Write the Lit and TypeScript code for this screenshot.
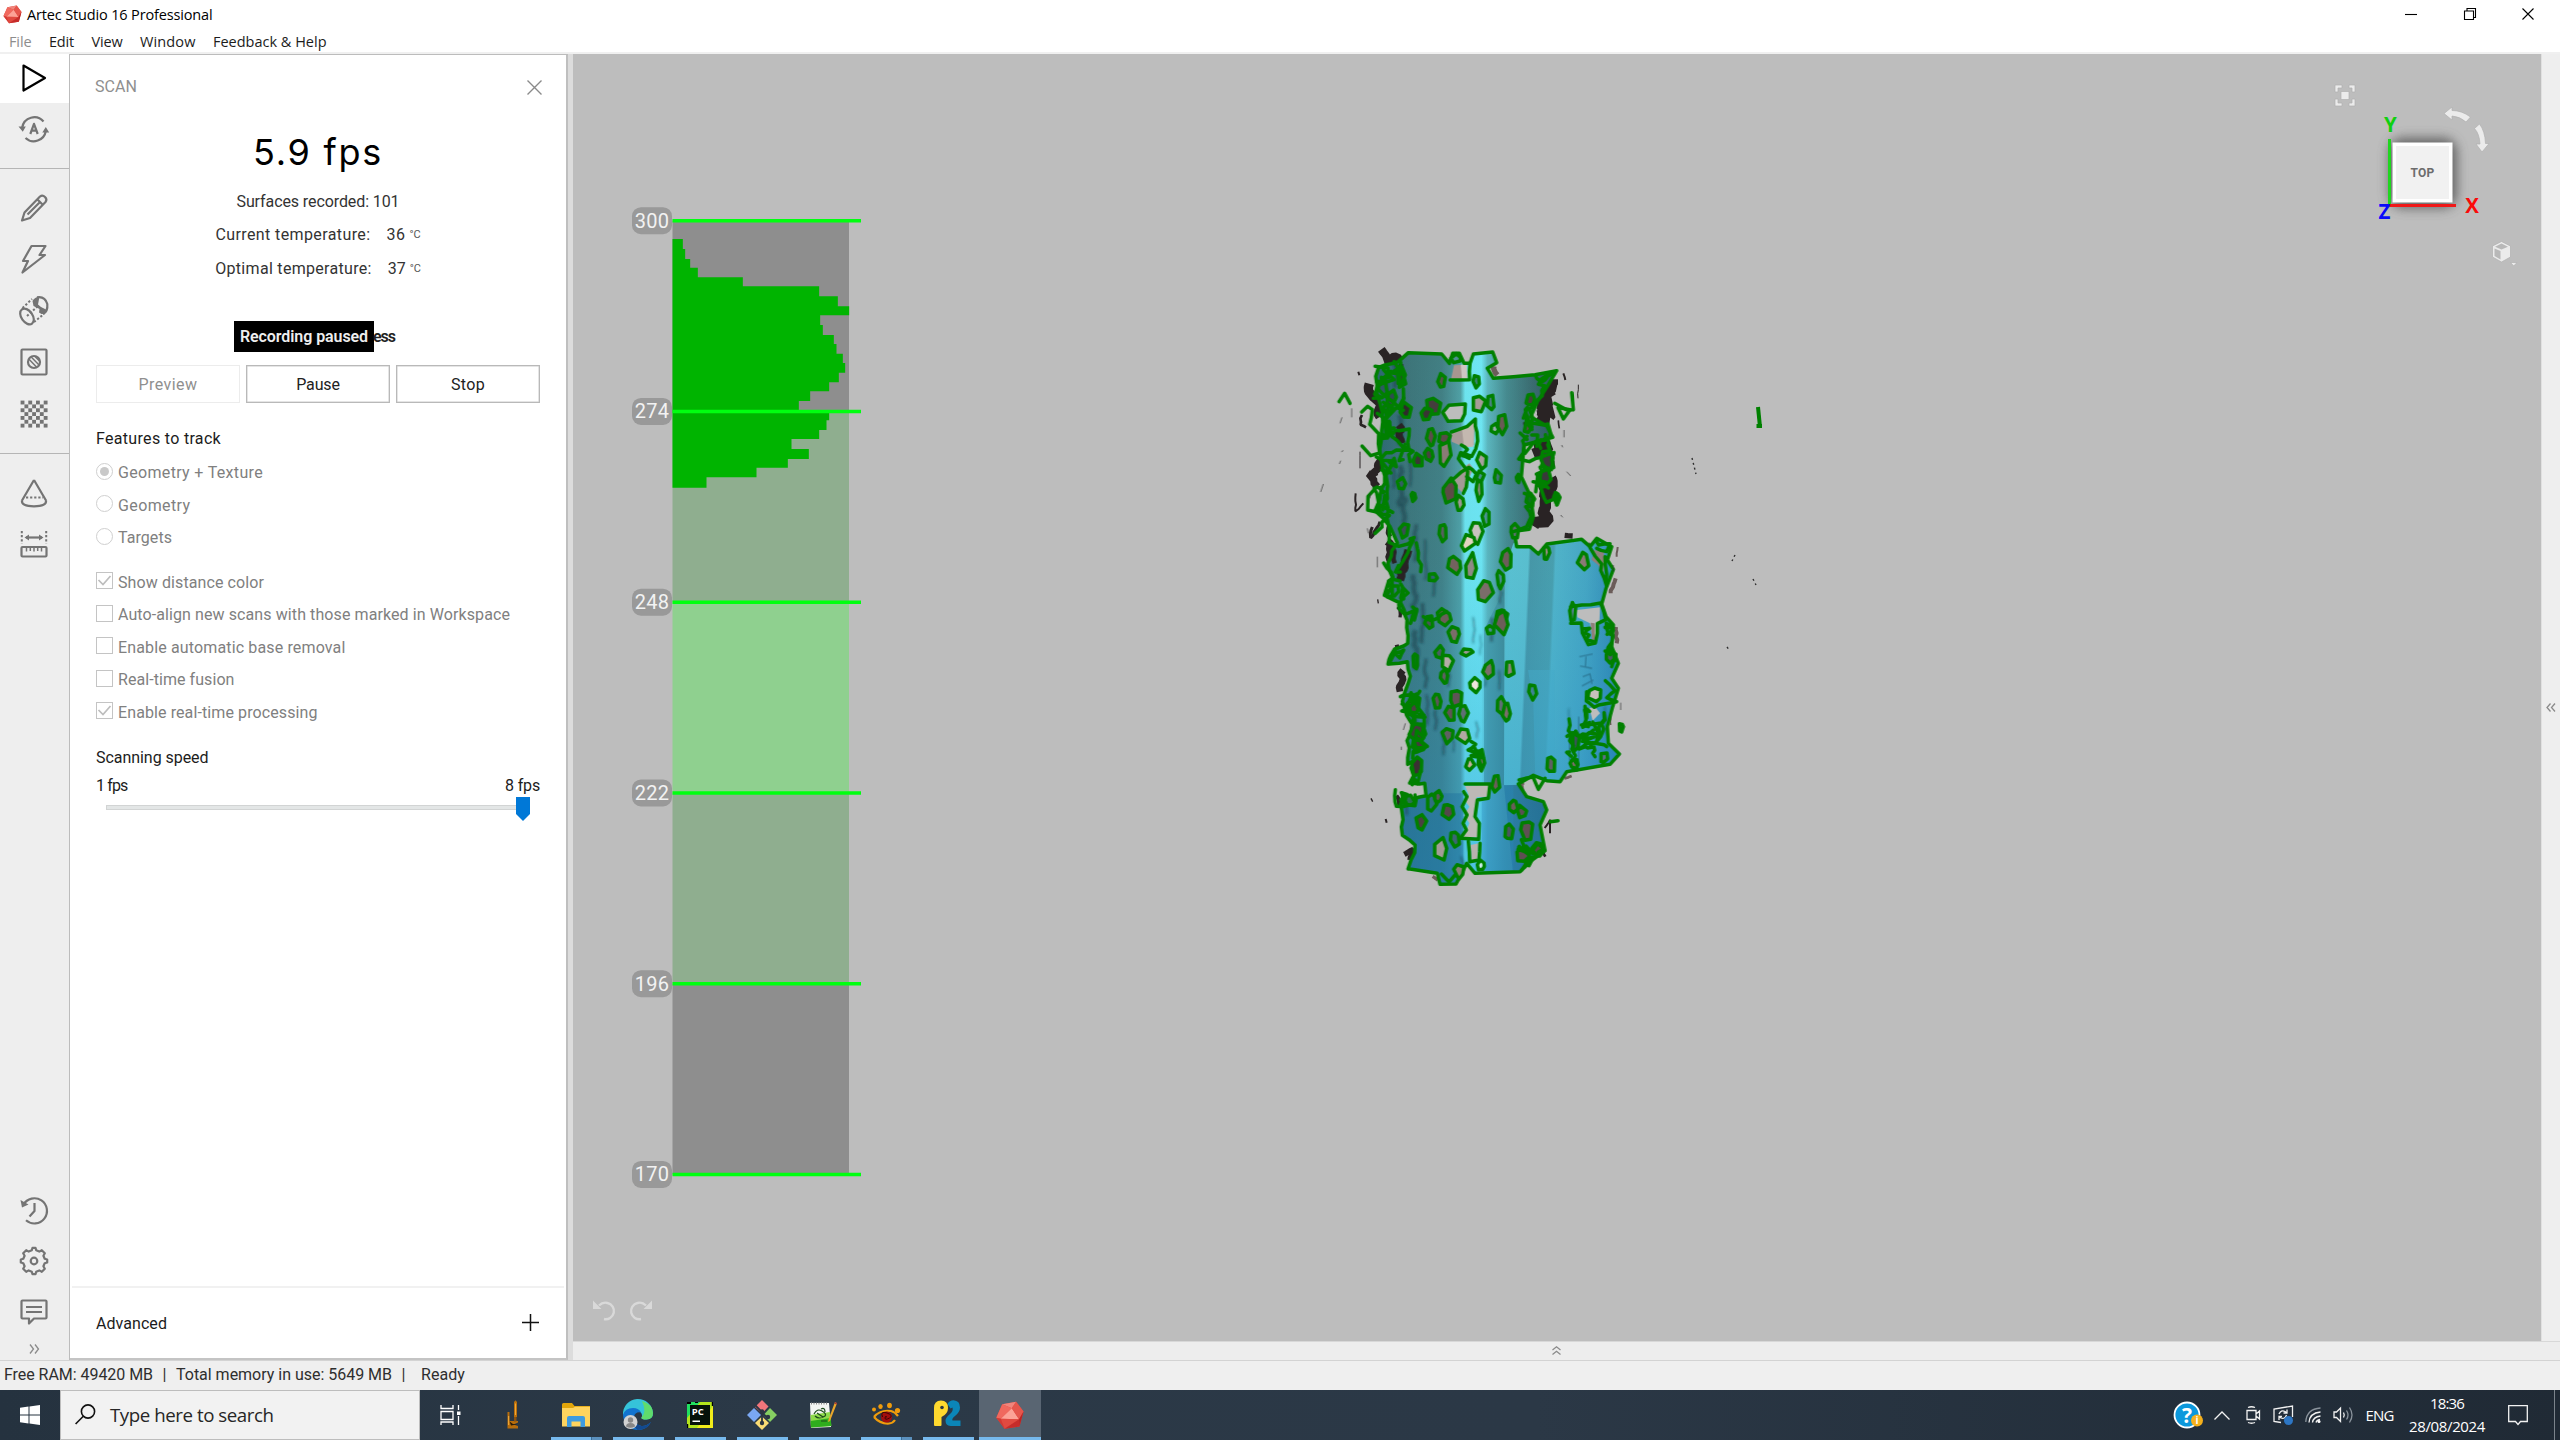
import { LitElement, html, svg, css } from "lit";
import { customElement, property } from "lit/decorators.js";
import { classMap } from "lit/directives/class-map.js";

/* A line of text whose tracking is adjusted so that it takes a given width. */
@customElement("fit-label")
class FitLabel extends LitElement {
  @property() text = "";
  @property({ type: Number }) width = 0;
  static styles = css`
    :host { display: inline-block; white-space: pre; }
    .t { display: inline-block; }
  `;
  render() {
    return html`<span class="t">${this.text}</span>`;
  }
  updated() {
    const el = this.renderRoot.querySelector(".t") as HTMLElement;
    el.style.letterSpacing = "0px";
    const natural = el.getBoundingClientRect().width;
    el.style.letterSpacing = `${((this.width - natural) / this.text.length).toFixed(3)}px`;
  }
}

const label = (text: string, width: number) => html`<fit-label .text=${text} .width=${width}></fit-label>`;

/* ---------- scanned surface ---------- */

let seed = 11;
const rnd = () => {
  seed = (seed * 16807) % 2147483647;
  return seed / 2147483647;
};

type Pt = [number, number];
const toPath = (p: Pt[], close = false) =>
  "M" + p.map(([x, y]) => `${x.toFixed(0)} ${y.toFixed(0)}`).join("L") + (close ? "Z" : "");

/* Breaks every segment into short steps and shifts them sideways. */
const jag = (p: Pt[], step: number, amp: number): Pt[] => {
  const out: Pt[] = [];
  for (let i = 0; i < p.length - 1; i++) {
    const [x0, y0] = p[i];
    const [x1, y1] = p[i + 1];
    const n = Math.max(1, Math.round(Math.hypot(x1 - x0, y1 - y0) / step));
    for (let k = 0; k < n; k++) {
      const t = k / n;
      out.push([x0 + (x1 - x0) * t + (rnd() - 0.5) * amp * 2, y0 + (y1 - y0) * t + (rnd() - 0.5) * amp]);
    }
  }
  out.push(p[p.length - 1]);
  return out;
};

/* Clean upper and right outline, then the ragged left one going upwards. */
const BODY_CLEAN: Pt[] = [
  [325, 68], [425, 72], [448, 100], [458, 70], [478, 70], [492, 100], [510, 100], [520, 72], [578, 66], [590, 98], [562, 115], [580, 145],
  [640, 140], [705, 134], [770, 122], [740, 172], [712, 215], [692, 260], [740, 288], [758, 322], [672, 345], [664, 440], [692, 500],
  [700, 560], [688, 598], [642, 604], [650, 650], [690, 650], [715, 672], [740, 642], [845, 628], [870, 650], [890, 625], [935, 650], [922, 690],
  [940, 718], [918, 775], [905, 822], [918, 860], [940, 885], [935, 950], [955, 1000], [935, 1045], [955, 1075], [938, 1130], [922, 1190],
  [925, 1240], [958, 1272], [930, 1303], [800, 1325], [780, 1355], [740, 1352], [700, 1336], [655, 1362], [680, 1400], [730, 1415],
  [740, 1440], [720, 1485], [735, 1562], [690, 1595], [660, 1625], [525, 1630], [500, 1600], [468, 1662], [420, 1663], [412, 1630],
  [330, 1617],
];
const BODY_RAGGED: Pt[] = [
  [330, 1617], [345, 1545], [310, 1515], [305, 1420], [380, 1395], [380, 1362], [335, 1360], [340, 1290], [318, 1306], [330, 1180], [302, 1112],
  [330, 1060], [318, 995], [268, 1000], [290, 960], [325, 940], [325, 870], [290, 815], [258, 800], [278, 745], [258, 700], [290, 640],
  [265, 590], [230, 540], [240, 480], [260, 440], [245, 385], [238, 330], [250, 250], [230, 190], [232, 112], [300, 95], [325, 68],
];

/* x, y, width, height, fill */
const HOLES: [number, number, number, number, string][] = [
  [425, 152, 22, 42, "#5d4f4c"], [528, 152, 22, 40, "#3f7f80"], [468, 85, 34, 28, "#4f8f92"],
  [540, 222, 44, 52, "#a69c98"], [573, 220, 24, 46, "#4b8082"], [398, 228, 44, 56, "#453d3d"], [380, 250, 32, 40, "#3a3434"], [318, 242, 36, 48, "#2f2a2b"],
  [605, 280, 26, 74, "#6a5a56"], [585, 296, 22, 28, "#9ab0b0"], [433, 325, 34, 46, "#5a4b48"], [392, 322, 28, 52, "#5c4d4b"], [435, 375, 34, 84, "#8a7b77"],
  [388, 375, 28, 40, "#4a4241"], [353, 390, 32, 52, "#3b3636"], [547, 392, 30, 58, "#a8a09c"], [448, 485, 46, 72, "#5c4b46"], [480, 518, 22, 44, "#9b9794"],
  [538, 478, 24, 74, "#8f8985"], [594, 444, 24, 48, "#3f7377"], [540, 440, 24, 30, "#4a8f94"], [558, 562, 22, 50, "#4d9296"], [528, 606, 40, 66, "#c9c3bf"],
  [502, 635, 48, 50, "#e2d3c0"], [429, 608, 28, 52, "#57605f"], [464, 702, 38, 54, "#74625e"], [512, 710, 32, 78, "#8f8985"], [555, 784, 46, 76, "#7b6d69"],
  [620, 690, 34, 74, "#6c5d59"], [400, 742, 30, 24, "#2f656d"], [600, 748, 22, 48, "#4a8a92"], [605, 862, 34, 50, "#6c5d59"], [430, 862, 40, 50, "#6c5d59"],
  [740, 668, 20, 46, "#9b8b86"], [850, 692, 36, 54, "#8b7a76"], [645, 605, 24, 40, "#5f6f70"],
  [606, 876, 40, 70, "#6c5d59"], [462, 910, 40, 48, "#7b6d69"], [572, 902, 28, 28, "#4a8a92"], [418, 968, 28, 48, "#4c5f63"],
  [444, 998, 36, 54, "#b5aca8"], [500, 966, 34, 22, "#9b9794"], [432, 1038, 22, 46, "#5f5f62"], [524, 1064, 34, 46, "#eee5dd"], [567, 1020, 34, 52, "#7b6d69"],
  [628, 1018, 34, 50, "#8f837f"], [697, 1080, 24, 50, "#3f8494"], [412, 1112, 24, 46, "#5b5659"], [468, 1106, 40, 48, "#5f5455"], [452, 1148, 34, 46, "#5f5455"],
  [490, 1150, 28, 46, "#5f6f74"], [602, 1130, 26, 50, "#5f6f74"], [620, 1148, 26, 52, "#7b6d69"], [444, 1216, 32, 48, "#5f5f62"], [489, 1214, 36, 48, "#b2a8a4"],
  [510, 1304, 24, 40, "#c5b0a0"], [543, 1292, 20, 66, "#7b6d69"], [752, 1304, 28, 44, "#5f5f62"],
  [587, 1362, 26, 48, "#6c5d59"], [444, 1445, 36, 52, "#54484a"], [362, 1475, 32, 46, "#4b4042"], [395, 1415, 30, 50, "#2f6f80"], [414, 1400, 24, 42, "#5b5659"],
  [422, 1556, 36, 72, "#a59c98"], [465, 1526, 28, 42, "#3c6572"], [640, 1430, 26, 42, "#6c5d59"], [666, 1446, 30, 38, "#5a5053"], [628, 1505, 26, 50, "#4b5560"],
  [680, 1500, 36, 66, "#5f5053"], [668, 1575, 40, 50, "#5f5053"], [714, 1560, 36, 42, "#54484a"], [476, 1624, 34, 40, "#8f7f79"], [544, 1606, 20, 34, "#cfeaf0"],
  [324, 1410, 44, 30, "#2a6f52"], [342, 1122, 34, 70, "#4c4140"], [352, 1205, 44, 58, "#453b3d"], [356, 1248, 38, 44, "#453b3d"], [352, 1310, 34, 56, "#3b3033"],
  [818, 845, 22, 60, "#4f7f88"], [826, 1230, 24, 66, "#3a5358"], [822, 1300, 26, 30, "#7b6d69"], [912, 1282, 22, 36, "#5f6f84"], [884, 1092, 48, 44, "#c9c1bd"],
  [930, 976, 24, 50, "#4b5a68"], [312, 600, 30, 46, "#3b4f52"], [388, 875, 24, 50, "#4a5558"], [346, 990, 14, 46, "#0f7420"],
  [340, 500, 12, 26, "#0f7420"], [305, 460, 22, 36, "#335f62"], [250, 175, 30, 60, "#2d5961"], [302, 135, 26, 60, "#39373a"], [274, 205, 26, 48, "#2f4b4e"],
  [742, 390, 34, 62, "#39393a"], [735, 440, 34, 52, "#39393a"], [690, 508, 26, 44, "#0f7420"], [655, 445, 12, 28, "#0f7420"], [964, 1192, 14, 28, "#4f6a4c"],
  [770, 506, 18, 34, "#0f7420"], [690, 210, 24, 36, "#4a3f3f"], [684, 290, 26, 40, "#5a4a4a"],
];

const holePath = (x: number, y: number, w: number, h: number) => {
  const n = 5 + Math.floor(rnd() * 2);
  const pts: Pt[] = [];
  const a0 = rnd() * 1.2 - 1.6;
  for (let i = 0; i < n; i++) {
    const a = a0 + (i / n) * Math.PI * 2 + (rnd() - 0.5) * 0.7;
    const r = 0.4 + rnd() * 0.2;
    pts.push([x + Math.cos(a) * w * r, y + Math.sin(a) * h * r]);
  }
  return toPath(pts, true);
};

/* Dark fringe strips next to the outline: centre line and width. */
const FRINGE: { p: Pt[]; w: number }[] = [
  { p: [[250, 62], [268, 100], [290, 75], [300, 110]], w: 24 },
  { p: [[205, 160], [215, 200], [238, 220], [240, 260]], w: 28 },
  { p: [[185, 255], [180, 285], [198, 292]], w: 8 },
  { p: [[238, 390], [225, 440], [208, 430], [232, 470]], w: 22 },
  { p: [[165, 490], [166, 545], [190, 520]], w: 6 },
  { p: [[215, 590], [212, 625], [240, 575]], w: 9 },
  { p: [[262, 630], [270, 680], [285, 740]], w: 24 },
  { p: [[258, 480], [262, 560], [270, 620]], w: 14 },
  { p: [[310, 680], [318, 730], [296, 760]], w: 32 },
  { p: [[756, 150], [742, 200], [728, 230], [748, 262], [712, 262]], w: 46 },
  { p: [[700, 335], [742, 350], [742, 375], [700, 372]], w: 32 },
  { p: [[762, 440], [748, 490], [742, 530], [734, 575], [700, 588]], w: 34 },
  { p: [[758, 395], [738, 420], [725, 470], [735, 520]], w: 22 },
  { p: [[790, 130], [796, 150]], w: 6 },
  { p: [[776, 270], [778, 295]], w: 5 },
  { p: [[790, 618], [818, 618]], w: 16 },
  { p: [[175, 125], [178, 136]], w: 6 },
  { p: [[835, 165], [834, 205]], w: 3 },
  { p: [[180, 365], [180, 415]], w: 3 },
  { p: [[296, 830], [300, 862]], w: 10 },
  { p: [[290, 945], [296, 980]], w: 12 },
  { p: [[305, 1020], [300, 1085]], w: 20 },
  { p: [[350, 815], [360, 850]], w: 12 },
  { p: [[312, 1575], [340, 1560], [330, 1590]], w: 16 },
  { p: [[735, 1495], [752, 1470], [750, 1510]], w: 6 },
  { p: [[258, 1468], [260, 1478]], w: 6 },
  { p: [[212, 1405], [218, 1415]], w: 4 },
  { p: [[232, 808], [235, 820]], w: 4 },
  { p: [[290, 1395], [296, 1425]], w: 12 },
  { p: [[730, 1568], [736, 1580]], w: 8 },
];

/* Dark gaps that open inside the surface near its rims. */
const GAPS: { p: Pt[]; w: number }[] = [
  { p: [[298, 285], [305, 340]], w: 22 },
  { p: [[318, 222], [322, 262]], w: 18 },
  { p: [[305, 100], [300, 160]], w: 14 },
  { p: [[326, 660], [318, 700], [300, 750]], w: 24 },
  { p: [[276, 640], [284, 700]], w: 14 },
  { p: [[695, 195], [686, 225]], w: 14 },
  { p: [[682, 275], [676, 305]], w: 16 },
  { p: [[345, 1300], [362, 1325]], w: 12 },
  { p: [[345, 1190], [362, 1215]], w: 16 },
  { p: [[340, 1100], [345, 1140]], w: 9 },
];

const BROWN: { p: Pt[]; w: number }[] = [
  { p: [[945, 745], [932, 790]], w: 12 },
  { p: [[952, 650], [950, 680]], w: 6 },
  { p: [[946, 890], [950, 940]], w: 12 },
  { p: [[940, 1060], [950, 1085]], w: 12 },
  { p: [[930, 1150], [932, 1185]], w: 5 },
  { p: [[580, 108], [592, 135]], w: 16 },
  { p: [[400, 1638], [414, 1650]], w: 10 },
  { p: [[630, 1622], [652, 1608]], w: 12 },
  { p: [[795, 1345], [815, 1338]], w: 8 },
  { p: [[690, 1402], [660, 1360]], w: 14 },
  { p: [[862, 640], [880, 655]], w: 10 },
];

/* Tangled boundary edges. */
const TANGLES: { p: Pt[]; s: number; a: number }[] = [
  { p: [[300, 95], [315, 160], [295, 170], [300, 110]], s: 20, a: 6 },
  { p: [[230, 110], [262, 115], [280, 150], [235, 165], [225, 190], [250, 205], [220, 205]], s: 22, a: 8 },
  { p: [[118, 215], [135, 190], [150, 220]], s: 60, a: 1 },
  { p: [[185, 245], [200, 228], [215, 240], [212, 285], [235, 310], [240, 370], [210, 378], [186, 348]], s: 26, a: 4 },
  { p: [[260, 200], [285, 230], [265, 270], [245, 330], [285, 300], [325, 300], [318, 360], [255, 365], [245, 400]], s: 20, a: 9 },
  { p: [[240, 250], [270, 310], [300, 350], [335, 360], [330, 395]], s: 20, a: 9 },
  { p: [[235, 380], [275, 395], [258, 440], [270, 470], [258, 520], [238, 540], [265, 560], [225, 610]], s: 20, a: 8 },
  { p: [[228, 470], [205, 500], [206, 540], [240, 548], [232, 490], [222, 475]], s: 30, a: 3 },
  { p: [[262, 570], [270, 640], [300, 650], [345, 630], [325, 670], [295, 715]], s: 22, a: 6 },
  { p: [[345, 640], [355, 670], [362, 725]], s: 20, a: 4 },
  { p: [[255, 700], [275, 730], [265, 770], [300, 770], [280, 800], [262, 800]], s: 16, a: 7 },
  { p: [[300, 760], [322, 790], [300, 820], [320, 855], [350, 838]], s: 18, a: 6 },
  { p: [[372, 862], [395, 870], [440, 845]], s: 16, a: 6 },
  { p: [[735, 135], [710, 160], [740, 165], [712, 215], [690, 240], [700, 280], [750, 285], [755, 325], [690, 340], [675, 370]], s: 22, a: 7 },
  { p: [[705, 140], [722, 155], [765, 125]], s: 14, a: 4 },
  { p: [[762, 220], [800, 240], [818, 238], [815, 188]], s: 40, a: 2 },
  { p: [[775, 232], [790, 268], [810, 240], [785, 235]], s: 30, a: 2 },
  { p: [[680, 320], [668, 350], [660, 390], [690, 395], [720, 380], [760, 370], [755, 410], [715, 430], [720, 480], [745, 520], [775, 490], [770, 525]], s: 20, a: 7 },
  { p: [[675, 490], [702, 500], [698, 528], [680, 530], [695, 560], [682, 590], [640, 605]], s: 20, a: 4 },
  { p: [[455, 305], [500, 290], [525, 270], [530, 330], [520, 380], [485, 370], [470, 385], [490, 400], [505, 450], [490, 490]], s: 24, a: 6 },
  { p: [[450, 455], [480, 425], [505, 410], [530, 430], [520, 455], [500, 440]], s: 20, a: 5 },
  { p: [[482, 345], [500, 360], [488, 375], [508, 385]], s: 14, a: 5 },
  { p: [[510, 100], [508, 150], [450, 150]], s: 30, a: 2 },
  { p: [[870, 655], [900, 700], [915, 765], [925, 730], [915, 680]], s: 24, a: 5 },
  { p: [[888, 630], [895, 645], [930, 640], [920, 665], [890, 655]], s: 20, a: 3 },
  { p: [[815, 830], [905, 820], [915, 870], [895, 880], [888, 940], [865, 945], [850, 910], [845, 880], [812, 880]], s: 30, a: 3 },
  { p: [[850, 895], [868, 895], [855, 910], [870, 915], [860, 930], [880, 935]], s: 12, a: 3 },
  { p: [[918, 880], [935, 920], [925, 950], [950, 985], [935, 1010]], s: 16, a: 7 },
  { p: [[915, 1055], [940, 1080], [920, 1100], [945, 1115], [880, 1130], [855, 1110], [860, 1085]], s: 18, a: 6 },
  { p: [[855, 1130], [850, 1190], [900, 1180], [915, 1150], [905, 1200], [890, 1240], [920, 1250]], s: 18, a: 7 },
  { p: [[805, 1170], [812, 1230], [830, 1320]], s: 16, a: 6 },
  { p: [[835, 1215], [870, 1210], [895, 1215], [890, 1240], [850, 1240], [840, 1255], [880, 1250], [885, 1280]], s: 12, a: 6 },
  { p: [[845, 1225], [885, 1222], [850, 1232], [880, 1240]], s: 10, a: 4 },
  { p: [[268, 1000], [280, 960], [300, 985], [312, 960], [285, 968]], s: 14, a: 5 },
  { p: [[300, 1100], [345, 1095], [355, 1130], [370, 1160], [330, 1155], [310, 1140], [340, 1120]], s: 14, a: 7 },
  { p: [[305, 1120], [330, 1130], [315, 1150], [345, 1160]], s: 12, a: 5 },
  { p: [[350, 1180], [372, 1190], [365, 1230], [382, 1250], [350, 1250], [338, 1285]], s: 16, a: 6 },
  { p: [[283, 1380], [288, 1430], [345, 1425], [345, 1395]], s: 18, a: 4 },
  { p: [[515, 1235], [525, 1245], [505, 1262], [540, 1262], [512, 1278], [548, 1285], [520, 1250], [545, 1310]], s: 14, a: 4 },
  { p: [[490, 1385], [500, 1400], [486, 1430], [500, 1455], [488, 1480], [500, 1500], [482, 1525], [535, 1528], [538, 1480], [525, 1460], [532, 1410], [565, 1405], [570, 1362], [495, 1362]], s: 60, a: 1 },
  { p: [[505, 1535], [510, 1595], [535, 1590], [540, 1540]], s: 30, a: 2 },
  { p: [[655, 1350], [700, 1340], [715, 1378], [735, 1345]], s: 30, a: 2 },
  { p: [[655, 1560], [690, 1570], [715, 1540], [735, 1560], [690, 1585], [665, 1620]], s: 16, a: 6 },
  { p: [[752, 1475], [774, 1472]], s: 30, a: 1 },
  { p: [[425, 1632], [445, 1655], [465, 1635]], s: 30, a: 2 },
];

/* Areas filled with short stray edges: x, y, width, height, count. */
const STRAY: [number, number, number, number, number][] = [
  [228, 110, 80, 100, 3], [240, 200, 90, 200, 9], [236, 400, 40, 190, 4], [265, 600, 70, 220, 5], [300, 820, 50, 50, 2],
  [670, 190, 40, 140, 4], [665, 330, 80, 50, 3], [705, 380, 45, 130, 4], [315, 1090, 40, 70, 4], [335, 1170, 35, 120, 3], [335, 1320, 30, 30, 2],
  [915, 860, 20, 130, 4], [850, 1150, 60, 100, 5], [660, 1550, 50, 45, 3], [300, 1395, 40, 25, 2], [805, 1190, 20, 110, 2],
];

/* Dark streaks across the surface. */
const STREAKS: [number, number, number, number][] = [
  [285, 130, 22, 90], [262, 190, 18, 110], [300, 300, 26, 90], [330, 430, 12, 80], [300, 470, 24, 120], [280, 430, 14, 90], [310, 540, 24, 80],
  [345, 640, 18, 110], [375, 690, 12, 120], [400, 770, 14, 60], [340, 800, 24, 130], [365, 880, 20, 120], [345, 960, 26, 120], [375, 1030, 16, 90],
  [405, 1170, 14, 60], [430, 1240, 12, 70], [460, 1245, 8, 40], [380, 1140, 14, 90], [445, 1040, 12, 60], [520, 900, 8, 80], [540, 945, 6, 60],
  [555, 1045, 8, 50], [598, 1050, 10, 60], [575, 900, 16, 70], [530, 1200, 8, 50], [690, 500, 26, 80], [680, 420, 22, 60], [600, 790, 12, 60],
  [805, 1180, 5, 90], [915, 1170, 8, 80], [345, 1180, 24, 80], [320, 1420, 14, 70], [485, 1600, 10, 40],
];

const scanModel = () => {
  seed = 11;
  const outline: Pt[] = [...BODY_CLEAN, ...jag(BODY_RAGGED, 26, 6)];
  const body = toPath(outline, true);
  const stray = STRAY.flatMap(([x, y, w, h, n]) =>
    Array.from({ length: n }, () => {
      const cx = x + rnd() * w;
      const cy = y + rnd() * h;
      const k = 3 + Math.floor(rnd() * 2);
      return toPath(Array.from({ length: k }, () => [cx + (rnd() - 0.5) * 34, cy + (rnd() - 0.5) * 50] as Pt));
    })
  );
  return svg`
  <defs>
    <linearGradient id="cyl" gradientUnits="userSpaceOnUse" x1="220" y1="0" x2="760" y2="0">
      <stop offset="0" stop-color="#2a6670"/><stop offset=".18" stop-color="#3d7478"/><stop offset=".38" stop-color="#427f83"/>
      <stop offset=".485" stop-color="#50a0a4"/><stop offset=".51" stop-color="#6ee4ee"/><stop offset=".6" stop-color="#6fe6f2"/>
      <stop offset=".635" stop-color="#5cb6bd"/><stop offset=".74" stop-color="#468a8e"/><stop offset=".88" stop-color="#3b6c70"/><stop offset="1" stop-color="#2e5a60"/>
    </linearGradient>
    <linearGradient id="deep" x1="0" y1="0" x2="0" y2="1">
      <stop offset="0" stop-color="#2098d8" stop-opacity="0"/><stop offset=".4" stop-color="#2098d8" stop-opacity=".05"/><stop offset="1" stop-color="#1c86c8" stop-opacity=".42"/>
    </linearGradient>
    <linearGradient id="box" gradientUnits="userSpaceOnUse" x1="600" y1="900" x2="960" y2="915">
      <stop offset="0" stop-color="#57b4c1"/><stop offset=".06" stop-color="#5cc2d0"/><stop offset=".21" stop-color="#5cc0ce"/><stop offset=".23" stop-color="#4897a5"/>
      <stop offset=".42" stop-color="#4a9fac"/><stop offset=".44" stop-color="#52b4c8"/><stop offset=".7" stop-color="#47a6c2"/><stop offset="1" stop-color="#2f84b0"/>
    </linearGradient>
    <clipPath id="shape"><path d=${body}/></clipPath>
    <filter id="soft" x="-40%" y="-10%" width="180%" height="120%"><feGaussianBlur stdDeviation="3"/></filter>
  </defs>
  ${FRINGE.map((f) => svg`<path class="fringe" d=${toPath(jag(f.p, 12, f.w * 0.35))} stroke-width=${f.w}/>`)}
  ${BROWN.map((f) => svg`<path class="brown" d=${toPath(jag(f.p, 10, f.w * 0.3))} stroke-width=${f.w}/>`)}
  <g clip-path="url(#shape)">
    <rect x="150" y="40" width="850" height="1660" fill="url(#cyl)"/>
    <path d="M614 720L640 640L1000 600V1340L800 1330L780 1360L612 1366Z" fill="url(#box)"/>
    <path d="M552 900L612 780V1366H552Z" fill="#3d8996" opacity=".55"/>
    <path d="M684 1020H764V1360H706L700 1120Z" fill="#4bb0c8" opacity=".5"/>
    <path d="M545 1366L640 1366V1640H545Z" fill="#3c9cc4" opacity=".45"/>
    <path d="M612 1366H760V1640H640Z" fill="#1f6a92" opacity=".5"/>
    <path d="M300 1390H490V1670H300Z" fill="#1a5f86" opacity=".4"/>
    <rect x="150" y="40" width="850" height="1660" fill="url(#deep)"/>
    <g filter="url(#soft)">
      ${STREAKS.map(([x, y, w, h]) => svg`<path class="streak" d=${toPath(jag([[x, y - h / 2], [x + 3, y], [x, y + h / 2]], 14, w * 0.25))} stroke-width=${w * 0.6}/>`)}
    </g>
    <path class="etch" d="M838 980L878 972M840 1008L876 1015M858 980L856 1012M848 1040L870 1032L876 1062M846 1068L880 1050M808 1210V1290M836 1160V1290"/>
    ${GAPS.map((f) => svg`<path class="fringe" d=${toPath(jag(f.p, 12, f.w * 0.3))} stroke-width=${f.w}/>`)}
  </g>
  <path d="M452 152L462 106L500 104L502 150Z" fill="#a8968f"/>
  <path d="M482 104L500 104L502 150L486 150Z" fill="#cfc6c2"/>
  <path d="M455 305L500 292L524 272L522 345L490 350L455 335Z" fill="#a69a96"/>
  <path d="M486 300L522 280L520 350L492 352Z" fill="#c4b8b0"/>
  <path d="M460 455L480 420L508 400L520 415L505 450L490 492L470 470Z" fill="#a39a96"/>
  <path d="M882 660L912 665L910 740L895 705L875 690Z" fill="#8f807c"/>
  <path d="M830 840L900 832L898 880L888 935L878 930L870 880L832 862Z" fill="#bdbdbd"/>
  <path d="M872 878L884 880L884 934L876 930Z" fill="#8f7f79"/>
  <path d="M868 1135L885 1130L900 1150L878 1172Z" fill="#bdbdbd"/>
  <path d="M495 1368L568 1364L562 1400L530 1402L520 1460L535 1480L534 1522L490 1522L508 1480L492 1456L508 1430L492 1408L506 1396Z" fill="#bdb9b6"/>
  <path d="M512 1545L536 1540L532 1588L514 1594Z" fill="#b9b2ae"/>
  <path d="M670 1365L700 1345L712 1380L738 1345L720 1400H676Z" fill="#bdbdbd"/>
  <path class="edge" d=${body}/>
  <path class="edge" d="M428 247L446 226L496 222L494 252L484 272L444 274Z" style="fill:#bdbdbd"/>
  ${HOLES.map(([x, y, w, h, c]) => svg`<path class="edge" d=${holePath(x, y, w, h)} style="fill:${c}"/>`)}
  ${TANGLES.map((t) => svg`<path class="edge" d=${toPath(jag(t.p, t.s, t.a))}/>`)}
  ${stray.map((d) => svg`<path class="edge" d=${d}/>`)}
  <path class="speck" d="M124 365L130 362M118 402L122 392M70 462L62 486M210 490V505M120 280L126 262M800 425L812 438M782 555L788 562M792 300V322M785 345L788 352M202 595L205 610M304 1250V1260M310 1200L316 1180M232 680V712M962 1118V1140M940 705V725M155 235V262"/>
  `;
};

/* ---------- histogram ---------- */

const HIST_Y = [147, 177, 207, 233, 262, 289, 319, 349, 376, 405, 435, 462, 491, 519, 548, 577, 604, 633, 661, 691, 720, 747, 777, 807, 833, 862, 893];
const HIST_X = [188, 195, 210, 233, 368, 597, 653, 687, 600, 608, 641, 649, 668, 675, 656, 627, 570, 536, 627, 619, 597, 514, 566, 503, 409, 259];
const TICKS = [300, 274, 248, 222, 196, 170];

/* One outline for all the bars, so that no seams show between them. */
const histPath = () => {
  const y = (v: number) => (v / 3 - 17).toFixed(2);
  let d = `M40.5 ${y(HIST_Y[0])}`;
  HIST_X.forEach((x, i) => {
    d += `H${(40.5 + (x - 157) / 3).toFixed(2)}V${y(HIST_Y[i + 1])}`;
  });
  return d + "H40.5Z";
};

/* ---------- icons ---------- */

const rail: Record<string, unknown> = {
  play: svg`<path class="k" d="M4.500 2.500L26 15L4.500 27.500Z"/>`,
  auto: svg`<path class="g" d="M3.200 13.500A12.200 12.200 0 0 1 24.500 7.500M26.800 17A12.200 12.200 0 0 1 6.500 24"/><path class="f" d="M-.5 12.500L6.800 12.500L3.800 17.800ZM23.300 18.500L30.200 18.500L26.800 13Z"/><path class="g" d="M11.300 20L15 9.800L18.700 20M12.600 16.700H17.400"/>`,
  pencil: svg`<path class="g" d="M3 27.500L5.500 19.500L21 3.500Q23.500 1.500 26 4T26.500 9L11 25L3 27.500ZM18.500 6.500L23.500 11.500M21 9L8.500 21.500"/>`,
  bolt: svg`<path class="g" d="M12.500 2H26.500L20.500 11H26L3.500 28.500L9 17H4L12.500 2Z"/>`,
  tube: svg`<ellipse class="g" cx="8" cy="20.500" rx="5.600" ry="8.800" transform="rotate(-35 8 20.500)"/><path class="f" d="M13.500 5Q15.500 1 20.500 .5L19 8.500L22 11L28 14Q26.500 18.500 22.500 18L20 16.500L20.500 13L14.500 10Z"/><path class="g" d="M18 1.300Q26 0 28.300 8Q29 15.500 24 18"/><path class="g d" d="M3.500 12L13 3M15 26L25 18M8 20L19 10"/>`,
  target: svg`<rect class="g" x="2.500" y="2.500" width="25" height="25" rx="1"/><circle class="g" cx="15" cy="15" r="6"/><path class="g thin" d="M9.800 12L17.500 20M12 9.800L20 18M15.500 9L21 14.500"/>`,
  checker: svg`${Array.from({ length: 7 }, (_, r) => Array.from({ length: 7 }, (_, c) => ((r + c) % 2 === 0 ? svg`<rect class="f" x=${1.6 + c * 3.85} y=${1.6 + r * 3.85} width="3.850" height="3.850"/>` : "")))}`,
  cone: svg`<path class="g" d="M15 2L3 22.500M15 2L27 22.500M3 22.500Q2 28.300 15 28.300T27 22.500"/><path class="g d" d="M7 19.500H24"/>`,
  ruler: svg`<rect class="g" x="2.500" y="18" width="25" height="9.500" rx="1"/><path class="g thin" d="M7.500 19V22.500M11.300 19V22M15 19V22.500M18.700 19V22M22.500 19V22.500"/><path class="g" d="M7 8.500H23"/><path class="f" d="M5.500 8.500L10 5.500V11.500ZM24.500 8.500L20 5.500V11.500Z"/><path class="g d" d="M2.800 2V14.500M27.200 2V14.500"/>`,
  clock: svg`<path class="g" d="M4.500 9.500A12.600 12.600 0 1 1 7 25.300M15.500 8V16L10.500 21.500"/><path class="f" d="M1.500 5L3 12.500L9.500 9.500Z"/>`,
  gear: svg`<path class="g" d="M12.800 4.300L13.500 1.800H16.500L17.200 4.300L20.300 5.600L22.800 4.200L25.800 7.200L24.400 9.700L25.700 12.800L28.200 13.500V16.500L25.700 17.200L24.400 20.300L25.800 22.800L22.800 25.800L20.300 24.400L17.200 25.700L16.500 28.200H13.500L12.800 25.700L9.700 24.400L7.200 25.800L4.200 22.800L5.600 20.300L4.300 17.200L1.800 16.500V13.500L4.300 12.800L5.600 9.700L4.200 7.200L7.200 4.200L9.700 5.600Z"/><circle class="g" cx="15" cy="15" r="3.300"/>`,
  chat: svg`<path class="g" d="M3.500 3.500H26.500Q27.500 3.500 27.500 4.500V20.500Q27.500 21.500 26.500 21.500H15L10 26.500V21.500H3.500Q2.500 21.500 2.500 20.500V4.500Q2.500 3.500 3.500 3.500ZM7 10H23M7 15H23"/>`,
};

const gem = svg`
  <path d="M7 3.500L21.500 .8L29.200 11L25 26.500L9.500 28.800L.8 17.500Z" fill="#e0463c"/>
  <path d="M7 3.500L21.500 .8L17 7.500Z" fill="#f0857c"/><path d="M7 3.500L17 7.500L5.500 18.500L.8 17.500Z" fill="#f0695e"/>
  <path d="M17 7.500L24.500 19L5.500 18.500Z" fill="#fca296"/><path d="M21.500 .8L29.200 11L24.500 19L17 7.500Z" fill="#e5564c"/>
  <path d="M5.500 18.500L24.500 19L9.500 28.800Z" fill="#e04a40"/><path d="M.8 17.500L5.500 18.500L9.500 28.800Z" fill="#d13a34"/><path d="M24.500 19L25 26.500L9.500 28.800Z" fill="#c62c2a"/><path d="M24.500 19L29.200 11L25 26.500Z" fill="#b82424"/>`;

const apps: { icon: unknown; line?: "one" | "two"; active?: boolean }[] = [
  {
    icon: svg`<path d="M15 2L16.500 .3L18 2V17H15ZM8.500 12H10.500V21L13 21H19V22.500L14.500 24.500L19 26V28.500H8.500Z" fill="#b86e0c"/><path d="M16 4L17 3V15H16ZM9 16H10.200V25H9Z" fill="#f0a634"/><path d="M15 17H17.500V21.500H15Z" fill="#8a5210"/><path d="M10.500 21.500L14 24L18 24.500L12 25.500Z" fill="#2a1c08"/>`,
  },
  {
    line: "two",
    icon: svg`<path d="M1 4.500Q1 3 2.500 3H11L13.500 6H29V26H1Z" fill="#e2a50a"/><path d="M1 8H12L14 6.800H29V26.500H1Z" fill="#ffd45e"/><path d="M6 27V18Q6 16 8 16H22Q24 16 24 18V27H19.500V21.500H10.500V27Z" fill="#3f9bdf"/>`,
  },
  {
    line: "one",
    icon: svg`<path d="M0 15A15 15 0 0 1 30 13Q30 19 23.500 19.500Q18 19.500 18.500 17.500Q20 15 17.500 12Q12 7.500 6 11.500Z" fill="#35c3d9"/><path d="M19 1Q29.500 4 30 13Q30 19 23.500 19.500Q18 19.500 18.500 17.500Q24 12 19 1Z" fill="#5fdc6c"/><path d="M0 15Q2 8 10 8Q16 8 18 12.500Q12 11.500 11 17Q10.500 24 18.500 26Q23 26.500 28 22Q24 30 14.500 30Q1 29 0 15Z" fill="#1173cf"/><path d="M11 17Q10.500 24 18.500 26Q23 26.500 28 22Q24 30 14.500 30Q7 24 11 17Z" fill="#12498f"/><circle cx="7.500" cy="22" r="7" fill="#d2d2d2"/><circle cx="7.500" cy="20" r="2.700" fill="#868686"/><path d="M3 26.500Q3 23 7.500 23T12 26.500Q7.500 29 3 26.500Z" fill="#868686"/>`,
  },
  {
    line: "one",
    icon: svg`<rect x="2" y="2" width="26" height="26" fill="#b4e41c"/><path d="M2 2H15L2 18Z" fill="#20e060"/><path d="M28 6V28H12Z" fill="#f2ec1a"/><path d="M2 2H6V4H2ZM10 2H13V3H10ZM2 24H3.200V28H2ZM26.800 2H28V6H26.800Z" fill="#000"/><rect x="5" y="5" width="20" height="20" fill="#06120a"/><text class="pc" x="6.800" y="14.500">PC</text><rect x="7.500" y="20.500" width="7.500" height="1.500" fill="#fff"/>`,
  },
  {
    line: "one",
    icon: svg`<path d="M15 0L21.500 6.500L15 13.500L8 7Z" fill="#f2757b"/><path d="M7 8L14 15L7 22L0 15Z" fill="#7aa7f2"/><path d="M23 8L30 15L23 22L16.500 15Z" fill="#86cf62"/><path d="M15 16.500L22 23L15 30L8 23Z" fill="#fbdc74"/><path class="gl" d="M8.500 5.500L15 12V24M15 13L21 18"/><circle cx="15" cy="11.500" r="2.200" fill="#2b3542"/><circle cx="15" cy="23" r="2.200" fill="#2b3542"/><circle cx="21" cy="17" r="2.200" fill="#2b3542"/>`,
  },
  {
    line: "one",
    icon: svg`<path d="M1 3H20L22 27L2 28Z" fill="#f3f5f3"/><path d="M1.500 15L21 12L22.300 26L2 27.500Z" fill="#8edb4a"/><path d="M1.600 21L21.800 18L22.300 26L2 27.500Z" fill="#2fae1d"/><path class="np" d="M5 14Q8 8 13 11T16 16Q10 20 6 16M12 9Q16 7 16 12M8 13L14 17M12 21L18 21"/><path class="dot" d="M2 3.500H19"/><path d="M26 2L28 3.200L21 21L19 22L19.500 19.500Z" fill="#e8a62c"/><path d="M26 2L28 3.200L27.500 4.600L25.400 3.400Z" fill="#a33"/>`,
  },
  {
    line: "two",
    icon: svg`<path class="eye" d="M3 17Q9 9.500 20 11Q24 12 27 16M3 17Q9 24 18 23.500Q22 23 24 20"/><circle cx="15.500" cy="17" r="5.500" fill="#a30d0d"/><path class="sp" d="M16 17Q14 15.500 14 18T18.500 18T16 13T11.500 17"/><g fill="#f09c0c"><circle cx="3" cy="9.500" r="2"/><ellipse cx="9.500" cy="6.500" rx="2.200" ry="2.600"/><ellipse cx="18.500" cy="5.500" rx="2.400" ry="2.800"/><circle cx="26.500" cy="10.500" r="2.600"/></g>`,
  },
  {
    line: "one",
    icon: svg`<path d="M14.500 4Q16.500 .3 20.500 .3Q27 .8 27 7.500Q27 12 22 16Q18.500 18.500 19.500 20.500H27.500V26H17.500Q12.500 25.500 12.500 20.500Q12.500 17.500 17 14Q20.500 11 19.500 7.500L17.500 8.500Z" fill="#0b86b8"/><path d="M1 8Q1 .5 8 .5Q15 .5 15 8Q15 14 8.500 17V25Q8.500 26 7.500 26H2Q1 26 1 25Z" fill="#ffd92e"/><circle cx="9" cy="7.500" r="1.800" fill="#2b3542"/>`,
  },
  { line: "one", active: true, icon: svg`<g transform="translate(.5 1) scale(.96)">${gem}</g>` },
];

@customElement("app-root")
class AppRoot extends LitElement {
  static styles = css`
    :host { display: block; width: 2560px; height: 1440px; overflow: hidden; font-family: Roboto, "Liberation Sans", sans-serif; font-size: 16px; color: #222; background: #efefef; }
    * { box-sizing: border-box; }
    .app { display: flex; flex-direction: column; width: 2560px; height: 1440px; }
    svg { display: block; overflow: visible; }
    .seg { font-family: "Open Sans", "Noto Sans", sans-serif; }

    .title { height: 30px; background: #fff; display: flex; align-items: center; padding: 0 0 1px 3px; font-size: 14.500px; color: #000; }
    .title .name { margin-left: 5px; flex: 1; }
    .wc { display: flex; gap: 46.500px; padding-right: 26px; margin-top: -1px; }
    .wc path { fill: none; stroke: #000; stroke-width: 1.100; }
    .menu { height: 24px; background: #fff; border-bottom: 2px solid #f0f0f0; display: flex; align-items: center; padding: 0 0 0 9px; gap: 17.500px; font-size: 14.500px; color: #1c1c1c; }
    .menu .off { color: #8d8d8d; }

    .work { height: 1306px; display: flex; }
    .rail { width: 70px; background: #eee; border-right: 1px solid #bcbcbc; display: flex; flex-direction: column; }
    .cell { height: 51.400px; display: flex; align-items: center; justify-content: center; padding-right: 1px; }
    .cell.on { background: #fff; height: 49px; padding-bottom: 1px; }
    .sep { height: 1px; background: #b5b5b5; margin: 14px 0 13px; flex: none; }
    .grow { flex: 1; }
    .more { height: 22px; display: flex; justify-content: center; align-items: center; padding-right: 1px; }
    .k { fill: none; stroke: #000; stroke-width: 2.200; stroke-linejoin: round; }
    .g { fill: none; stroke: #747474; stroke-width: 2.200; stroke-linejoin: round; }
    .g.thin { stroke-width: 1.500; }
    .g.d { stroke-width: 2; stroke-dasharray: 2.200 1.900; }
    .f { fill: #747474; }
    .chev { fill: none; stroke: #8a8a8a; stroke-width: 1.300; }

    .panel { width: 498px; background: #fff; border: 1px solid #bcbcbc; border-left: 0; border-right: 2px solid #bfbfbf; border-bottom: 2px solid #c4c4c4; display: flex; flex-direction: column; }
    .head { height: 62px; display: flex; justify-content: space-between; align-items: center; padding: 0 24px 0 25px; color: #8f8f8f; }
    .head svg { margin-top: 2px; }
    .head path { stroke: #8a8a8a; stroke-width: 1.400; }
    .fps { height: 67px; padding-top: 3px; font-family: Inter, Roboto, sans-serif; font-size: 36px; color: #000; display: flex; align-items: center; justify-content: center; }
    .info { height: 34px; padding-bottom: 1px; display: flex; align-items: center; justify-content: center; color: #333; }
    .fps + .info { padding: 0; }
    .info .v { margin-left: 16px; }
    .info .u { margin-left: 4px; font-size: 11px; color: #555; }
    .state { margin-top: 35px; height: 31px; display: flex; align-items: center; padding-left: 164px; font-weight: 600; color: #222; }
    .state > fit-label { margin-left: -1px; }
    .tip { width: 140px; height: 31px; background: #000; color: #eee; display: flex; align-items: center; padding-left: 6px; }
    .btns { margin: 13px 26px 0; display: flex; gap: 6px; }
    .btn { width: 144px; height: 38px; border: 1px solid #b9b9b9; box-shadow: inset 0 0 0 .5px #ccc; display: flex; align-items: center; justify-content: center; padding-top: 1px; }
    .btn.off { border-color: #ececec; box-shadow: none; color: #8f8f8f; }
    .form { padding: 0 26px; }
    .h { height: 33px; margin-top: 19px; display: flex; align-items: center; color: #1c1c1c; }
    .opt { height: 32.500px; display: flex; align-items: center; gap: 5px; color: #808080; }
    .opt fit-label { padding-top: 3px; }
    .checks { margin-top: 12px; }
    .radio { width: 17px; height: 17px; border: 1px solid #cfcfcf; border-radius: 50%; display: flex; align-items: center; justify-content: center; }
    .radio.on::after { content: ""; width: 9px; height: 9px; border-radius: 50%; background: #c9c9c9; }
    .box { width: 17px; height: 17px; border: 1px solid #c4c4c4; }
    .box path { fill: none; stroke: #bdbdbd; stroke-width: 1.700; }
    .h.speed { margin-top: 14px; height: 32px; }
    .ends { height: 24px; display: flex; justify-content: space-between; align-items: center; color: #1c1c1c; }
    .slider { height: 24px; padding: 8px 10px 0; position: relative; }
    .track { height: 5px; background: #e3e6e6; border: 1px solid #d2d4d4; }
    .thumb { position: absolute; right: 10px; top: 0; fill: #0078d7; }
    .adv { height: 72px; margin: 0 2px; border-top: 2px solid #f1f1f1; padding: 0 25px 0 24px; display: flex; align-items: center; justify-content: space-between; color: #1c1c1c; }
    .adv svg { margin-top: -2px; }
    .adv path { stroke: #111; stroke-width: 1.500; }
    .gutter { width: 5px; background: #dcdcdc; }

    .right { flex: 1; display: flex; flex-direction: column; }
    .top { display: flex; height: 1287px; }
    .view { width: 1968px; background: #bdbdbd; position: relative; }
    .side { flex: 1; background: #eee; display: flex; align-items: center; justify-content: center; padding-top: 19px; border-left: 1px solid #e0e0e0; }
    .foot { height: 19px; background: #ededed; border-top: 1px solid #d8d8d8; display: flex; justify-content: center; align-items: center; padding: 0 20px 1px 0; }
    .chart { position: absolute; left: 59px; top: 153px; }
    .pill { fill: #999; }
    .tick { font: 20px Roboto, sans-serif; fill: #f2f2f2; text-anchor: middle; letter-spacing: .3px; }
    .mark { stroke: #00ff10; stroke-width: 3.400; }
    .bars { fill: #00b400; }
    .model { position: absolute; left: 727px; top: 276px; }
    .edge { fill: none; stroke: #008000; stroke-width: 10.500; stroke-linejoin: round; stroke-linecap: round; }
    .fringe { fill: none; stroke: #292324; stroke-linejoin: bevel; }
    .brown { fill: none; stroke: #6b5c59; stroke-linejoin: bevel; }
    .streak { fill: none; stroke: #173c47; opacity: .5; }
    .etch { fill: none; stroke: #23647f; stroke-width: 4; opacity: .6; }
    .speck { fill: none; stroke: #333; stroke-width: 3; opacity: .7; }
    .bits { position: absolute; left: 1070px; top: 260px; }
    .bits .dark { fill: none; stroke: #2e2e2e; stroke-width: 1.400; stroke-dasharray: 2 3; }
    .bits .green { fill: none; stroke: #008000; stroke-width: 4; }
    .nav { position: absolute; left: 1750px; top: 20px; }
    .nav text { font: 700 20.500px "Open Sans", sans-serif; text-anchor: middle; }
    .nav .face { font: 700 12px Roboto, sans-serif; fill: #6c6c6c; letter-spacing: .3px; }
    .nav .w { fill: #ebebeb; stroke: #b0b0b0; stroke-width: .700; }
    .undo { position: absolute; left: 20px; top: 1245px; }
    .undo .a { fill: none; stroke: #d9d9d9; stroke-width: 2.400; }
    .undo .b { fill: #d9d9d9; }

    .status { height: 30px; background: #efefef; border-top: 1px solid #d3d3d3; display: flex; align-items: center; padding: 0 0 2px 4px; color: #2e2e2e; }
    .status .bar { width: 23px; text-align: center; }
    .status .ready { margin-left: 6px; }

    .task { height: 50px; background: linear-gradient(90deg, #25323f, #2b3947 30%, #2b3846 60%, #222d39 90%, #202a35); display: flex; color: #fff; }
    .start { width: 60px; display: flex; align-items: center; justify-content: center; }
    .search { width: 360px; background: #f2f2f2; border: 1px solid #bdbdbd; display: flex; align-items: center; padding: 0 0 1px 14px; gap: 14px; font-size: 18.700px; color: #262626; }
    .search path, .search circle { fill: none; stroke: #111; stroke-width: 1.600; }
    .tv { width: 63px; display: flex; align-items: center; justify-content: center; padding: 0 3px 1px 0; }
    .tv path { fill: none; stroke: #fff; stroke-width: 1.300; }
    .appb { width: 62px; display: flex; flex-direction: column; align-items: center; padding-top: 10px; }
    .appb.act { background: #596572; }
    .ln { width: 51px; height: 3px; margin-top: 7px; background: #76b9ed; }
    .ln.two { background: linear-gradient(90deg, #76b9ed 40px, #3d6d96 40px, #3d6d96 41px, #5a90bd 41px); }
    .act .ln { width: 62px; }
    .pc { font: 700 9.500px "Open Sans", sans-serif; fill: #fff; }
    .gl { fill: none; stroke: #2b3542; stroke-width: 1.800; }
    .np { fill: none; stroke: #1c4a1a; stroke-width: 1.200; }
    .dot { stroke: #888; stroke-width: 2; stroke-dasharray: 1 1.500; }
    .eye { fill: none; stroke: #f09c0c; stroke-width: 2.200; }
    .sp { fill: none; stroke: #3a0505; stroke-width: 1; }
    .tray { display: flex; align-items: center; font-size: 15px; }
    .tc { display: flex; align-items: center; justify-content: center; }
    .tc .l { fill: none; stroke: #f2f2f2; stroke-width: 1.300; }
    .tc .dim { fill: none; stroke: #8a939c; stroke-width: 1.300; }
    .w38 { width: 38px; } .w32 { width: 32px; } .w30 { width: 30px; } .w29 { width: 29px; } .w31 { width: 31px; } .w45 { width: 45px; } .w52 { width: 52px; }
    .clock { width: 90px; display: flex; flex-direction: column; align-items: center; line-height: 23px; }
    .q { font: 700 21px "Open Sans", sans-serif; fill: #fff; text-anchor: middle; }
    .i { font: 700 10px "Open Sans", sans-serif; fill: #fff; text-anchor: middle; }
    .peek { width: 11px; height: 50px; border-right: 1px solid #7b838b; margin-right: 5px; }
  `;

  private icon(name: string) {
    return html`<svg width="30" height="30" viewBox="0 0 30 30">${rail[name]}</svg>`;
  }

  private check(text: string, width: number, on = false) {
    return html`<div class="opt"><span class="box">${on ? html`<svg width="15" height="15"><path d="M1.500 7L6 11.500L13.500 3"/></svg>` : ""}</span>${label(text, width)}</div>`;
  }

  private radio(text: string, width: number, on = false) {
    return html`<div class="opt"><span class=${classMap({ radio: true, on })}></span>${label(text, width)}</div>`;
  }

  private chart() {
    const bands = ["#8e8e8e", "#8fae8f", "#8fd08f", "#8fae8f", "#8e8e8e"];
    return html`<svg class="chart" width="232" height="985">
      ${bands.map((c, i) => svg`<rect x="40.500" y=${13.7 + i * 190.75} width="176.500" height="190.750" fill=${c}/>`)}
      <path class="bars" d=${histPath()}/>
      ${TICKS.map((t, i) => {
        const y = 13.7 + i * 190.75;
        return svg`<rect class="pill" x="0" y=${y - 13.5} width="40" height="27" rx="9"/><text class="tick" x="20" y=${y + 7}>${t}</text><path class="mark" d="M40.500 ${y}H229"/>`;
      })}
    </svg>`;
  }

  private navigator() {
    return html`<svg class="nav" width="210" height="200">
      <defs><filter id="glow" x="-50%" y="-50%" width="200%" height="200%"><feGaussianBlur stdDeviation="6"/></filter></defs>
      <path class="w" d="M12 11H19V14H15V18H12ZM26 11H32V18H29V14H26ZM12 25H15V29H19V32H12ZM29 25H32V32H26V29H29ZM18 17.500H26V25.500H18Z"/>
      <rect x="66" y="64" width="68" height="70" rx="14" fill="#555" opacity=".85" filter="url(#glow)"/>
      <rect x="69.500" y="68.500" width="60" height="60" fill="#fff"/><rect x="73" y="72" width="53" height="53" fill="#f1f1f1"/>
      <path d="M66.500 65V131" stroke="#1fd51f" stroke-width="3"/><path d="M66.500 131.500H133" stroke="#f01818" stroke-width="2.800"/>
      <text x="67.500" y="58" fill="#0fd00f">Y</text><text x="149" y="139" fill="#fa0a0a">X</text><text x="61.500" y="145" fill="#0a0afa">Z</text>
      <text class="face" x="99.500" y="103">TOP</text>
      <path class="w" d="M121 39.500L129 33V36.500Q139 36.500 147.500 43L143 48Q137 42.500 129 42V46Z"/>
      <path class="w" d="M151.500 54.500L156.500 50Q162 57 162.500 69.500H166L159 78L153 70H157Q156.500 60 151.500 54.500Z"/>
      <path class="w" d="M169.500 172L178.500 167.500L187.500 172V183L178.500 188L169.500 183Z"/><path d="M172 172.700L178.500 169.500L185 172.700L178.500 175.500ZM171.500 174.500L177.500 177V185.500L171.500 182Z" fill="#b8b8b8"/>
      <path class="w" d="M187.500 188.500H194L190.700 192Z"/>
    </svg>`;
  }

  render() {
    return html`<div class="app">
      <div class="title seg">
        <svg width="19" height="19" viewBox="0 0 30 30">${gem}</svg>
        <span class="name">${label("Artec Studio 16 Professional", 185.5)}</span>
        <div class="wc">
          <svg width="12" height="12"><path d="M0 6.500H12"/></svg>
          <svg width="12" height="12"><path d="M.5 3H9.500V11.500H.5ZM3 3V.5H11.500V9.500H9.500"/></svg>
          <svg width="12" height="12"><path d="M.5 .5L11.500 11.500M11.500 .5L.5 11.500"/></svg>
        </div>
      </div>
      <div class="menu seg">
        <span class="off">${label("File", 22.5)}</span>${label("Edit", 25)}${label("View", 31)}${label("Window", 55.5)}${label("Feedback & Help", 113.5)}
      </div>
      <div class="work">
        <div class="rail">
          <div class="cell on">${this.icon("play")}</div>
          <div class="cell">${this.icon("auto")}</div>
          <div class="sep"></div>
          ${["pencil", "bolt", "tube", "target", "checker"].map((n) => html`<div class="cell">${this.icon(n)}</div>`)}
          <div class="sep"></div>
          ${["cone", "ruler"].map((n) => html`<div class="cell">${this.icon(n)}</div>`)}
          <div class="grow"></div>
          ${["clock", "gear", "chat"].map((n) => html`<div class="cell">${this.icon(n)}</div>`)}
          <div class="more"><svg width="11" height="10"><path class="chev" d="M1 .5L4.500 5L1 9.500M6 .5L9.500 5L6 9.500"/></svg></div>
        </div>
        <div class="panel">
          <div class="head">${label("SCAN", 42)}<svg width="15" height="15"><path d="M.5 .5L14.500 14.500M14.500 .5L.5 14.500"/></svg></div>
          <div class="fps">${label("5.9 fps", 130)}</div>
          <div class="info">${label("Surfaces recorded: 101", 163)}</div>
          <div class="info">${label("Current temperature:", 155)}<span class="v">${label("36", 19)}</span><span class="u">${label("°C", 11)}</span></div>
          <div class="info">${label("Optimal temperature:", 156.5)}<span class="v">${label("37", 18)}</span><span class="u">${label("°C", 11)}</span></div>
          <div class="state"><div class="tip">${label("Recording paused", 128)}</div>${label("ess", 22)}</div>
          <div class="btns">
            <div class="btn off">${label("Preview", 59)}</div><div class="btn">${label("Pause", 43.5)}</div><div class="btn">${label("Stop", 34)}</div>
          </div>
          <div class="form">
            <div class="h">${label("Features to track", 125)}</div>
            ${this.radio("Geometry + Texture", 145, true)}${this.radio("Geometry", 72.5)}${this.radio("Targets", 54)}
            <div class="checks">
              ${this.check("Show distance color", 146, true)}
              ${this.check("Auto-align new scans with those marked in Workspace", 392)}
              ${this.check("Enable automatic base removal", 227.5)}
              ${this.check("Real-time fusion", 116.5)}
              ${this.check("Enable real-time processing", 199.5, true)}
            </div>
            <div class="h speed">${label("Scanning speed", 112.5)}</div>
            <div class="ends">${label("1 fps", 31.5)}${label("8 fps", 35)}</div>
            <div class="slider"><div class="track"></div><svg class="thumb" width="14" height="24"><path d="M0 0H14V17L7 24L0 17Z"/></svg></div>
          </div>
          <div class="grow"></div>
          <div class="adv">${label("Advanced", 71)}<svg width="17" height="17"><path d="M0 8.500H17M8.500 0V17"/></svg></div>
        </div>
        <div class="gutter"></div>
        <div class="right">
          <div class="top">
            <div class="view">
              ${this.chart()}
              <svg class="model" width="340" height="580" viewBox="0 0 1020 1740">${scanModel()}</svg>
              <svg class="bits" width="200" height="520">
                <path class="green" d="M115 93L117 113"/><path class="green" d="M113.500 112L119 112"/>
                <path class="dark" d="M49 144L53 160M92 241L89 247M110 265L113 271M84 333L87 337"/>
              </svg>
              ${this.navigator()}
              <svg class="undo" width="70" height="26">
                <path class="a" d="M6 6.500Q10 2.500 14.500 4A8 8 0 0 1 11 20M53 6.500Q49 2.500 44.500 4A8 8 0 0 0 48 20"/><path class="b" d="M0 1.500V10H8.500ZM59 1.500V10H50.500Z"/>
              </svg>
            </div>
            <div class="side"><svg width="10" height="9"><path class="chev" d="M4.500 .5L1 4.500L4.500 8.500M9 .5L5.500 4.500L9 8.500"/></svg></div>
          </div>
          <div class="foot"><svg width="9" height="9"><path class="chev" d="M.5 4L4.500 .8L8.500 4M.5 8.500L4.500 5.300L8.500 8.500"/></svg></div>
        </div>
      </div>
      <div class="status">${label("Free RAM: 49420 MB", 149)}<span class="bar">|</span>${label("Total memory in use: 5649 MB", 216)}<span class="bar">|</span><span class="ready">${label("Ready", 44)}</span></div>
      <div class="task seg">
        <div class="start"><svg width="20" height="20"><path d="M0 2.800L8.500 1.600V9.500H0ZM9.500 1.500L20 0V9.500H9.500ZM0 10.500H8.500V18.400L0 17.200ZM9.500 10.500H20V20L9.500 18.500Z" fill="#fff"/></svg></div>
        <div class="search"><svg width="21" height="21"><circle cx="13" cy="7.500" r="6.600"/><path d="M8.300 12.200L.6 20"/></svg>${label("Type here to search", 163.5)}</div>
        <div class="tv"><svg width="21" height="20"><path d="M1 0V3.500H13V0M1 6.500H13V14.500H1ZM1 20V17H13V20M18.500 0V5M18.500 11V20"/><rect x="17" y="6.500" width="3.500" height="3.500" fill="#fff"/></svg></div>
        ${apps.map((a) => html`<div class=${classMap({ appb: true, act: !!a.active })}><svg width="30" height="30" viewBox="0 0 30 30">${a.icon}</svg>${a.line ? html`<div class=${classMap({ ln: true, two: a.line === "two" })}></div>` : ""}</div>`)}
        <div class="grow"></div>
        <div class="tray">
          <div class="tc w38"><svg width="28" height="28"><circle cx="14" cy="14" r="12.500" fill="#0c98dc" stroke="#fff" stroke-width="1.800"/><text class="q" x="14" y="21.500">?</text><circle cx="24" cy="19.500" r="6" fill="#f5b01c"/><text class="i" x="24" y="23.200">i</text></svg></div>
          <div class="tc w32"><svg width="16" height="9"><path class="l" d="M.5 8.500L8 1L15.500 8.500"/></svg></div>
          <div class="tc w30"><svg width="14" height="18"><path class="l" d="M1 4.500H10V13.500H1ZM10 8L13.500 5V13L10 10M2 1.500Q5.500 0 9 1.500M2 16.500Q5.500 18 9 16.500"/></svg></div>
          <div class="tc w29"><svg width="20" height="20"><path class="l" d="M8 17.500L1 16.500V4L19.500 1V12M6 9Q8 4.500 12 6.500L14 8M14 4.500V8H10.500M13.500 10Q12 14.500 8 13L6 11.500M6 15V11.500H9"/><circle cx="15.500" cy="15.500" r="4.500" fill="#2d76c4"/></svg></div>
          <div class="tc w31"><svg width="16" height="16"><path class="dim" d="M.8 15Q1.500 2 15.500 1"/><path class="l" d="M4 15.500Q4.500 6 15.500 5M7.500 15.500Q8 10 15.500 9"/><path class="l" d="M11 15.500Q11.500 13 15 12.500"/><circle cx="14" cy="14.500" r="1.500" fill="#fff"/></svg></div>
          <div class="tc w29"><svg width="20" height="18"><path class="l" d="M1 6H3.500L7.500 2V15.500L3.500 11.500H1ZM10.500 6.500Q12 9 10.500 11.500"/><path class="dim" d="M13.500 4.500Q16.500 9 13.500 13.500M16.500 1.500Q21.500 9 16.500 16.500"/></svg></div>
          <div class="tc w45">${label("ENG", 28)}</div>
          <div class="clock">${label("18:36", 34)}${label("28/08/2024", 76)}</div>
          <div class="tc w52"><svg width="20" height="20"><path class="l" d="M.7 .7H19.300V16.500H12.500L10 19.500L7.500 16.500H.7Z"/></svg></div>
          <div class="peek"></div>
        </div>
      </div>
    </div>`;
  }
}
